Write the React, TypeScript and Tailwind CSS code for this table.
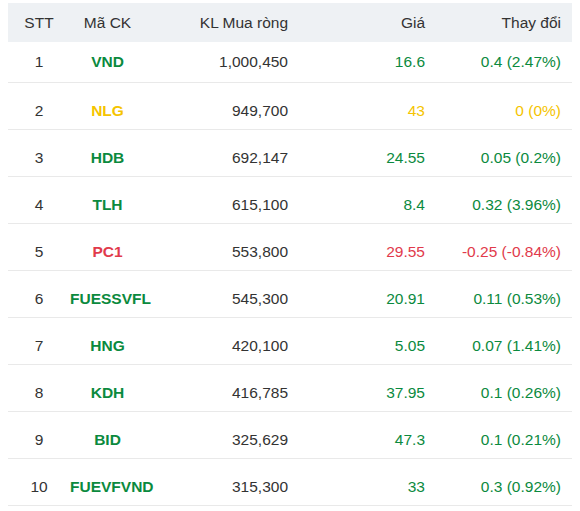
const rows = [
  { stt: 1, code: "VND", vol: "1,000,450", price: "16.6", change: "0.4 (2.47%)", tone: "up" },
  { stt: 2, code: "NLG", vol: "949,700", price: "43", change: "0 (0%)", tone: "flat" },
  { stt: 3, code: "HDB", vol: "692,147", price: "24.55", change: "0.05 (0.2%)", tone: "up" },
  { stt: 4, code: "TLH", vol: "615,100", price: "8.4", change: "0.32 (3.96%)", tone: "up" },
  { stt: 5, code: "PC1", vol: "553,800", price: "29.55", change: "-0.25 (-0.84%)", tone: "down" },
  { stt: 6, code: "FUESSVFL", vol: "545,300", price: "20.91", change: "0.11 (0.53%)", tone: "up" },
  { stt: 7, code: "HNG", vol: "420,100", price: "5.05", change: "0.07 (1.41%)", tone: "up" },
  { stt: 8, code: "KDH", vol: "416,785", price: "37.95", change: "0.1 (0.26%)", tone: "up" },
  { stt: 9, code: "BID", vol: "325,629", price: "47.3", change: "0.1 (0.21%)", tone: "up" },
  { stt: 10, code: "FUEVFVND", vol: "315,300", price: "33", change: "0.3 (0.92%)", tone: "up" },
];

const toneClass: Record<string, string> = {
  up: "text-[#0b8a3e]",
  flat: "text-[#f5c400]",
  down: "text-[#e13a4b]",
};

const cols = "grid grid-cols-[62px_75px_143px_137px_136px_1fr]";

export default function App() {
  return (
    <div
      className="w-[580px] h-[511px] bg-white px-2 pt-[3px] overflow-hidden text-[15.5px] text-[#333]"
      style={{ fontFamily: '"Liberation Sans", Arial, sans-serif' }}
    >
      <div className={`${cols} h-[39px] items-center bg-[#eef1f4]`}>
        <div className="text-center">STT</div>
        <div className="text-center">Mã CK</div>
        <div className="text-right">KL Mua ròng</div>
        <div className="text-right">Giá</div>
        <div className="text-right">Thay đổi</div>
        <div />
      </div>
      {rows.map((r, i) => (
        <div
          key={r.stt}
          className={`${cols} items-center border-b border-[#e9e9e9] ${
            i === 0 ? "h-[41px]" : "h-[47px] pt-[10px]"
          }`}
        >
          <div className="text-center">{r.stt}</div>
          <div className={`text-center font-bold ${toneClass[r.tone]}`}>{r.code}</div>
          <div className="text-right">{r.vol}</div>
          <div className={`text-right ${toneClass[r.tone]}`}>{r.price}</div>
          <div className={`text-right ${toneClass[r.tone]}`}>{r.change}</div>
          <div />
        </div>
      ))}
    </div>
  );
}
